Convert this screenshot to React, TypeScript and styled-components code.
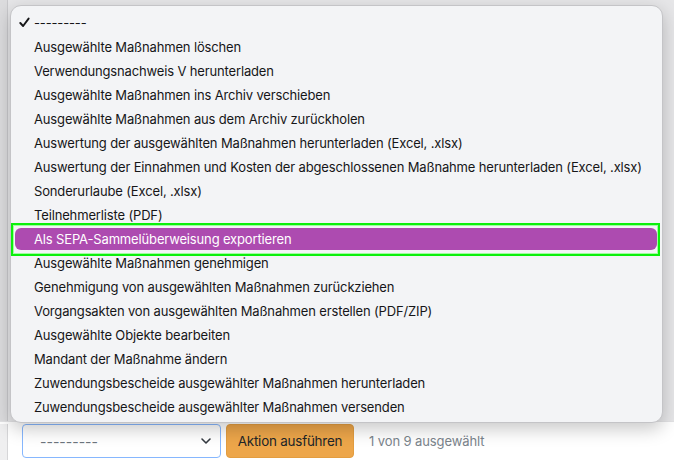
import React from "react";
import styled, { createGlobalStyle } from "styled-components";

const Global = createGlobalStyle`
  html, body { margin: 0; padding: 0; }
  body { font-family: Inter, "Noto Sans", "Liberation Sans", sans-serif; width: 674px; height: 460px; overflow: hidden; }
`;

const Page = styled.div`
  position: relative;
  width: 674px;
  height: 460px;
  display: flex;
  flex-direction: column;
  background: #fff;
`;

const Backdrop = styled.div`
  height: 421px;
  background: #e6e6e8;
  display: flex;
`;

const SideStrip = styled.div`
  width: 7px;
  background: #dcdcde;
  border-right: 1px solid #c9c9cc;
`;

const Footer = styled.div`
  flex: 1;
  display: flex;
  align-items: flex-start;
  border-top: 1px solid #e2e2e4;
  padding: 2px 0 0 0;
`;

const FooterStrip = styled.div`
  width: 7px;
  align-self: stretch;
  background: #efeff0;
  border-right: 1px solid #d6d6d8;
`;

const FooterRow = styled.div`
  display: flex;
  align-items: center;
  gap: 5px;
  margin-left: 14px;
`;

const Select = styled.div`
  box-sizing: border-box;
  width: 199px;
  height: 34px;
  border: 1px solid #86b7fe;
  border-radius: 4px;
  background: #fff;
  display: flex;
  align-items: center;
  justify-content: space-between;
  padding: 0 8px 0 17px;
  color: #6c757d;
  font-size: 14px;
`;

const Button = styled.div`
  box-sizing: border-box;
  width: 128px;
  height: 34px;
  border-radius: 4px;
  background: #eda64a;
  border: 1px solid #e39d40;
  color: #212529;
  font-size: 13.4px;
  letter-spacing: -0.2px;
  display: flex;
  align-items: center;
  justify-content: center;
`;

const Counter = styled.span`
  margin-left: 10px;
  color: #7b848c;
  font-size: 13px;
  letter-spacing: -0.1px;
`;

const Menu = styled.div`
  position: absolute;
  left: 10px;
  top: 5px;
  width: 653px;
  height: 418px;
  box-sizing: border-box;
  background: #f3f4f6;
  border: 1px solid #c4c4c7;
  border-radius: 11px;
  box-shadow: 0 6px 18px rgba(0, 0, 0, 0.22);
  padding: 5px 5px 0 4px;
`;

const Item = styled.div`
  height: 24px;
  padding: 1px 0;
  box-sizing: border-box;
`;

const ItemInner = styled.div<{ $active?: boolean }>`
  position: relative;
  height: 22px;
  display: flex;
  align-items: center;
  padding-left: 19px;
  border-radius: 6px;
  font-size: 13px;
  letter-spacing: -0.15px;
  color: ${(p) => (p.$active ? "#fff" : "#161618")};
  background: ${(p) => (p.$active ? "#ad4bb0" : "transparent")};
  white-space: nowrap;
`;

const Highlight = styled.div`
  position: absolute;
  left: -4px;
  right: -3px;
  top: -5px;
  bottom: -6px;
  border: 2px solid #0cf00c;
  box-shadow: inset 0 0 0 1px rgba(140, 255, 140, 0.8);
  pointer-events: none;
`;

const Check = styled.svg`
  position: absolute;
  left: 4px;
  top: 5px;
`;

const items = [
  "---------",
  "Ausgewählte Maßnahmen löschen",
  "Verwendungsnachweis V herunterladen",
  "Ausgewählte Maßnahmen ins Archiv verschieben",
  "Ausgewählte Maßnahmen aus dem Archiv zurückholen",
  "Auswertung der ausgewählten Maßnahmen herunterladen (Excel, .xlsx)",
  "Auswertung der Einnahmen und Kosten der abgeschlossenen Maßnahme herunterladen (Excel, .xlsx)",
  "Sonderurlaube (Excel, .xlsx)",
  "Teilnehmerliste (PDF)",
  "Als SEPA-Sammelüberweisung exportieren",
  "Ausgewählte Maßnahmen genehmigen",
  "Genehmigung von ausgewählten Maßnahmen zurückziehen",
  "Vorgangsakten von ausgewählten Maßnahmen erstellen (PDF/ZIP)",
  "Ausgewählte Objekte bearbeiten",
  "Mandant der Maßnahme ändern",
  "Zuwendungsbescheide ausgewählter Maßnahmen herunterladen",
  "Zuwendungsbescheide ausgewählter Maßnahmen versenden",
];

export default function App() {
  return (
    <Page>
      <Global />
      <Backdrop>
        <SideStrip />
      </Backdrop>
      <Footer>
        <FooterStrip />
        <FooterRow>
          <Select>
            <span>---------</span>
            <svg width="12" height="12" viewBox="0 0 12 12">
              <path d="M2 4 L6 8 L10 4" fill="none" stroke="#343a40" strokeWidth="1.6" strokeLinecap="round" strokeLinejoin="round" />
            </svg>
          </Select>
          <Button>Aktion ausführen</Button>
          <Counter>1 von 9 ausgewählt</Counter>
        </FooterRow>
      </Footer>
      <Menu>
        {items.map((t, i) => (
          <Item key={i}>
            <ItemInner $active={i === 9}>
              {i === 0 && (
                <Check width="11" height="11" viewBox="0 0 11 11">
                  <path d="M1.3 6 L4.1 9 L9.6 1.6" fill="none" stroke="#161618" strokeWidth="1.9" strokeLinecap="round" strokeLinejoin="round" />
                </Check>
              )}
              {i === 9 && <Highlight />}
              {t}
            </ItemInner>
          </Item>
        ))}
      </Menu>
    </Page>
  );
}
